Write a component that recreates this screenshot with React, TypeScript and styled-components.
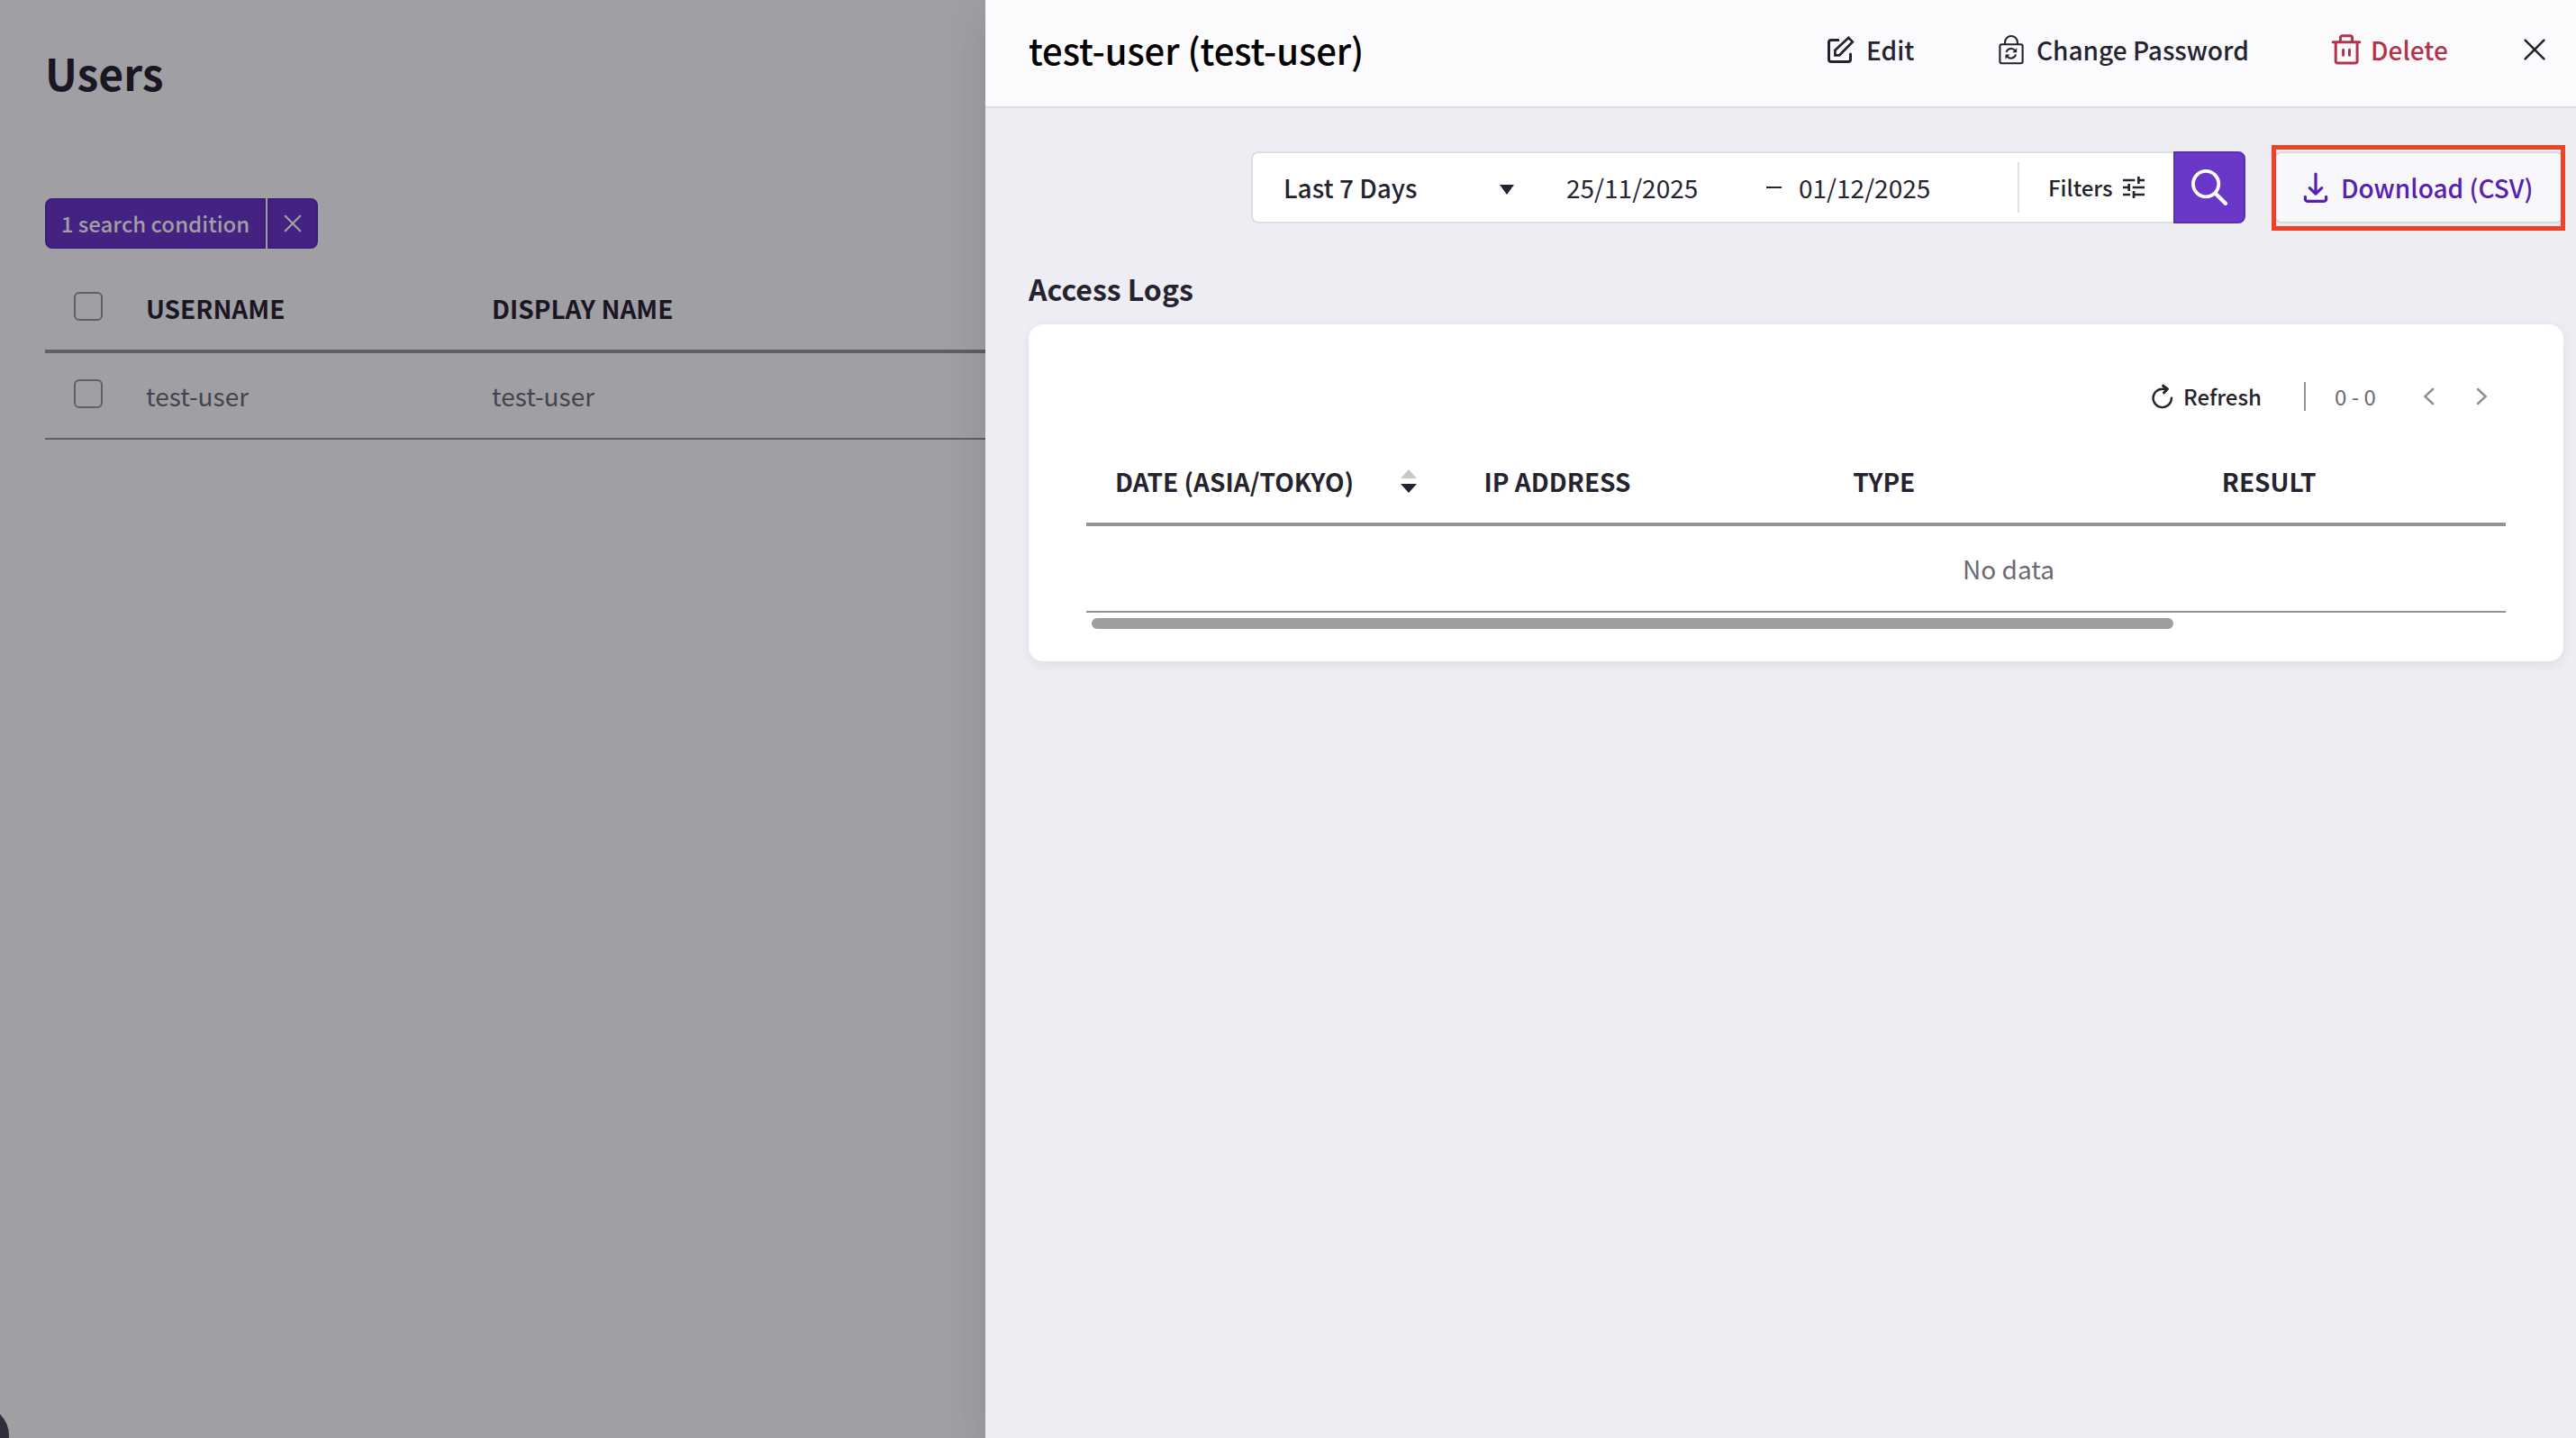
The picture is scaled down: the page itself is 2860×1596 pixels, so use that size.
import React from "react";
import styled, { createGlobalStyle } from "styled-components";

const ink = "#252330";
const line = "#939393";

const GlobalStyle = createGlobalStyle`
  *, *::before, *::after { box-sizing: border-box; }
  body {
    margin: 0;
    overflow: hidden;
    background: #a09fa4;
    font-family: "Noto Sans CJK JP", "Noto Sans", sans-serif;
    color: ${ink};
  }
  button { font: inherit; color: inherit; background: none; border: 0; padding: 0; margin: 0; text-align: left; }
  h1, h2, h3 { margin: 0; }
  svg { display: block; flex: none; }
`;

const Screen = styled.div`
  position: relative;
  display: grid;
  grid-template-columns: 1094px minmax(0, 1fr);
  height: 1596px;
  overflow: hidden;
`;

/* ---------- Dimmed users page ---------- */

const UsersPage = styled.main`
  padding: 44px 0 0 50px;
  background: #a09fa4;
  color: #1a1624;
  overflow: hidden;
`;

const PageTitle = styled.h1`
  font-size: 48px;
  font-weight: 700;
  line-height: 72px;
`;

const ConditionGroup = styled.div`
  display: flex;
  gap: 2px;
  margin-top: 104px;
  height: 56px;
`;

const ConditionButton = styled.button<{ $width: number; $side: "left" | "right" }>`
  display: flex;
  align-items: center;
  justify-content: center;
  width: ${(p) => p.$width}px;
  border: 2px solid #3c1d77;
  border-radius: ${(p) => (p.$side === "left" ? "8px 0 0 8px" : "0 8px 8px 0")};
  background: #442281;
  color: #a09fa4;
  font-size: 24px;
  font-weight: 500;
  line-height: 36px;
  white-space: nowrap;
`;

const UsersTable = styled.div`
  margin-top: 20px;
`;

const UsersRow = styled.div<{ $head?: boolean }>`
  display: grid;
  grid-template-columns: 112px 384px 1fr;
  align-items: center;
  height: 96px;
  border-bottom: ${(p) => (p.$head ? 4 : 2)}px solid #606064;
  font-size: 28px;
  font-weight: ${(p) => (p.$head ? 700 : 400)};
  line-height: 42px;
  color: ${(p) => (p.$head ? "#1a1624" : "#46434d")};
`;

const Checkbox = styled.span`
  width: 32px;
  height: 32px;
  margin: 0 0 4px 32px;
  border: 2px solid #606064;
  border-radius: 6px;
`;

const HelpBubble = styled.div`
  position: absolute;
  left: -54px;
  bottom: -29px;
  width: 64px;
  height: 64px;
  border-radius: 50%;
  background: #302e3a;
`;

/* ---------- Drawer ---------- */

const Drawer = styled.aside`
  position: relative;
  background: #eeedf3;
  box-shadow: 0 16px 48px rgba(0, 0, 0, 0.12);
`;

const DrawerHeader = styled.header`
  display: flex;
  align-items: center;
  height: 120px;
  padding: 0 32px 8px 48px;
  border-bottom: 2px solid #dfdee2;
  background: #fbfafd;
`;

const DrawerTitle = styled.h2`
  flex: 1;
  font-size: 40px;
  font-weight: 500;
  line-height: 60px;
  letter-spacing: -0.05px;
  color: #000;
`;

const HeaderAction = styled.button<{ $width: number; $gap: number; $danger?: boolean }>`
  display: flex;
  align-items: center;
  gap: ${(p) => p.$gap}px;
  width: ${(p) => p.$width}px;
  font-size: 28px;
  font-weight: 500;
  line-height: 40px;
  white-space: nowrap;
  color: ${(p) => (p.$danger ? "#b0344a" : ink)};
`;

const DrawerBody = styled.div`
  padding: 48px 14px 0 48px;
`;

const Toolbar = styled.div`
  display: flex;
  justify-content: flex-end;
  gap: 32px;
  height: 80px;
`;

const SearchGroup = styled.div`
  display: flex;
  align-items: stretch;
  width: 1104px;
`;

const SearchFields = styled.div`
  display: flex;
  align-items: center;
  flex: 1;
  border: 2px solid #dfdee2;
  border-right: 0;
  border-radius: 8px 0 0 8px;
  background: #fff;
  font-size: 28px;
  line-height: 42px;
  white-space: nowrap;
`;

const RangeSelect = styled.button`
  display: flex;
  align-items: center;
  justify-content: space-between;
  width: 348px;
  padding: 0 58px 0 34px;
  font-weight: 500;
`;

const Caret = styled.span`
  margin-top: 4px;
  border: 8px solid transparent;
  border-top: 11px solid ${ink};
  border-bottom: 0;
`;

const DateField = styled.span<{ $width: number }>`
  width: ${(p) => p.$width}px;
`;

const RangeDash = styled.span`
  width: 17px;
  height: 2px;
  margin-right: 19px;
  background: ${ink};
`;

const FieldDivider = styled.span`
  width: 2px;
  height: 56px;
  background: #dfdee2;
`;

const FiltersButton = styled.button`
  display: flex;
  align-items: center;
  justify-content: space-between;
  flex: 1;
  padding: 0 28px 0 32px;
  font-size: 24px;
  font-weight: 500;
  line-height: 36px;
`;

const SearchButton = styled.button`
  display: flex;
  align-items: center;
  justify-content: center;
  width: 80px;
  border: 2px solid #5a2fb0;
  border-radius: 0 8px 8px 0;
  background: #6a38c8;
`;

const DownloadSlot = styled.div`
  position: relative;
  width: 321px;
`;

const DownloadButton = styled.button`
  display: flex;
  align-items: center;
  gap: 14px;
  width: 100%;
  height: 80px;
  padding: 0 30px;
  border: 2px solid #d9d8df;
  border-radius: 8px;
  background: #f8f7fb;
  color: #5620b0;
  font-size: 28px;
  font-weight: 500;
  line-height: 42px;
  white-space: nowrap;
`;

const Highlight = styled.div`
  position: absolute;
  inset: -7px -2px -8px -3px;
  border: 5px solid #ee4126;
  pointer-events: none;
`;

const SectionTitle = styled.h3`
  margin-top: 48px;
  font-size: 32px;
  font-weight: 700;
  line-height: 48px;
`;

const Card = styled.section`
  height: 374px;
  margin-top: 16px;
  padding: 48px 64px 0;
  border-radius: 16px;
  background: #fff;
  box-shadow: 0 4px 12px rgba(50, 45, 80, 0.08);
`;

const CardToolbar = styled.div`
  display: flex;
  align-items: center;
  justify-content: flex-end;
  height: 64px;
  padding-right: 20px;
  font-size: 24px;
  line-height: 36px;
`;

const RefreshButton = styled.button`
  display: flex;
  align-items: center;
  gap: 10px;
  width: 170px;
  font-weight: 500;
`;

const ToolbarDivider = styled.span`
  width: 2px;
  height: 32px;
  background: ${line};
`;

const PageRange = styled.span`
  width: 46px;
  margin-left: 32px;
  color: #6b6974;
  white-space: nowrap;
`;

const PagerButton = styled.button<{ $offset: number }>`
  margin-left: ${(p) => p.$offset}px;
  color: ${line};
`;

const TableViewport = styled.div`
  margin-top: 16px;
  overflow: hidden;
`;

const LogHead = styled.div`
  display: grid;
  grid-template-columns: repeat(5, 1fr);
  align-items: center;
  width: 2048px;
  height: 96px;
  border-bottom: 4px solid ${line};
  font-size: 28px;
  font-weight: 700;
  line-height: 42px;
`;

const LogHeadCell = styled.div`
  display: flex;
  align-items: center;
  gap: 52px;
  padding-left: 32px;
  white-space: nowrap;
`;

const EmptyRow = styled.div`
  display: flex;
  align-items: center;
  justify-content: center;
  width: 2048px;
  height: 96px;
  border-bottom: 2px solid ${line};
  color: #6b6974;
  font-size: 28px;
  line-height: 42px;
`;

const ScrollTrack = styled.div`
  padding: 6px;
`;

const ScrollThumb = styled.div`
  width: 1201px;
  height: 12px;
  border-radius: 6px;
  background: #9e9e9e;
`;

/* ---------- Icons ---------- */

const EditIcon = () => (
  <svg width="34" height="34" viewBox="0 0 34 34" fill="none" stroke="currentColor" strokeWidth="3" strokeLinecap="round">
    <path d="M12.8 6.5H5a2.5 2.5 0 0 0-2.5 2.5v19A2.5 2.5 0 0 0 5 30.5h19a2.5 2.5 0 0 0 2.5-2.5v-6" />
    <path d="M9.4 17.8 24.3 3.9l4.5 4.5-14.6 14.9H9.4z" strokeWidth="2.7" />
  </svg>
);

const LockIcon = () => (
  <svg width="30" height="34" viewBox="0 0 30 34" fill="none" stroke="currentColor" strokeWidth="2.1">
    <rect x="2.4" y="11.3" width="25.2" height="21" rx="2" />
    <path d="M8 11V9a6.95 6.95 0 0 1 13.9 0v2" />
    <path d="M9.5 20a5.6 5.6 0 0 1 9.9-1.8M20.1 22.6a5.6 5.6 0 0 1-9.9 1.8" strokeWidth="2" />
    <path d="M21.2 15.2v5h-5zM8.5 27.5v-5h5z" fill="currentColor" stroke="none" />
  </svg>
);

const TrashIcon = () => (
  <svg width="34" height="34" viewBox="0 0 34 34" fill="none" stroke="currentColor" strokeWidth="3" strokeLinecap="round">
    <path d="M2.2 8.7h29.6M10.4 8V4a2.3 2.3 0 0 1 2.3-2.3h8.6A2.3 2.3 0 0 1 23.6 4v4M5.2 8.7v21.2a2.2 2.2 0 0 0 2.2 2.2h19.5a2.2 2.2 0 0 0 2.2-2.2V8.7" />
    <path d="M13.6 17.2v6M20.5 17.2v6" />
  </svg>
);

const CloseIcon = ({ size, reach, weight }: { size: number; reach: number; weight: number }) => {
  const a = size / 2 - reach;
  const b = size / 2 + reach;
  return (
    <svg width={size} height={size} fill="none" stroke="currentColor" strokeWidth={weight} strokeLinecap="round">
      <path d={`M${a} ${a}L${b} ${b}M${b} ${a}L${a} ${b}`} />
    </svg>
  );
};

const TuneIcon = () => (
  <svg width="32" height="32" viewBox="0 0 24 24" fill="currentColor">
    <path d="M3 17v2h6v-2H3zM3 5v2h10V5H3zm10 16v-2h8v-2h-8v-2h-2v6h2zM7 9v2H3v2h4v2h2V9H7zm14 4v-2H11v2h10zm-6-4h2V7h4V5h-4V3h-2v6z" />
  </svg>
);

const SearchIcon = () => (
  <svg width="40" height="40" viewBox="0 0 40 40" fill="none" stroke="#fff" strokeLinecap="round">
    <circle cx="16.1" cy="16.1" r="14.2" strokeWidth="3.8" />
    <path d="M26.5 26.5 37.8 37.8" strokeWidth="4.4" />
  </svg>
);

const DownloadIcon = () => (
  <svg width="28" height="36" viewBox="0 0 28 36" fill="none" stroke="currentColor" strokeWidth="3.2" strokeLinecap="round" strokeLinejoin="round">
    <path d="M14 3v21.5M7.3 18.7l6.7 6.4 6.7-6.4M2.4 28.3V31a2.3 2.3 0 0 0 2.3 2.3h18.6a2.3 2.3 0 0 0 2.3-2.3v-2.7" />
  </svg>
);

const RefreshIcon = () => (
  <svg width="26" height="32" viewBox="0 0 26 32" fill="none" stroke="currentColor" strokeWidth="2.4" strokeLinecap="round" strokeLinejoin="round">
    <path d="M22.9 17.6A10.2 10.2 0 1 1 12.7 7.7h4.6" />
    <path d="M13.6 4.2 18.4 7.8 14.6 11.8" strokeWidth="3" />
  </svg>
);

const Chevron = ({ flip }: { flip?: boolean }) => (
  <svg width="14" height="24" viewBox="0 0 14 24" fill="none" stroke="currentColor" strokeWidth="2.6" strokeLinecap="round">
    <path d={flip ? "M3 4l8.6 8L3 20" : "M11 4 2.4 12 11 20"} />
  </svg>
);

const SortIcon = () => (
  <svg width="18" height="26" viewBox="0 0 18 26">
    <path d="M9 0l9 10H0z" fill="#c8c8c8" />
    <path d="M9 26l9-10H0z" fill={ink} />
  </svg>
);

const logColumns = ["DATE (ASIA/TOKYO)", "IP ADDRESS", "TYPE", "RESULT", ""];

export default function App() {
  return (
    <>
      <GlobalStyle />
      <Screen>
        <UsersPage>
          <PageTitle>Users</PageTitle>
          <ConditionGroup>
            <ConditionButton $width={245} $side="left">1 search condition</ConditionButton>
            <ConditionButton $width={56} $side="right" aria-label="Clear conditions">
              <CloseIcon size={24} reach={8.2} weight={2.2} />
            </ConditionButton>
          </ConditionGroup>
          <UsersTable>
            <UsersRow $head>
              <Checkbox />
              <span>USERNAME</span>
              <span>DISPLAY NAME</span>
            </UsersRow>
            <UsersRow>
              <Checkbox />
              <span>test-user</span>
              <span>test-user</span>
            </UsersRow>
          </UsersTable>
          <HelpBubble />
        </UsersPage>

        <Drawer>
          <DrawerHeader>
            <DrawerTitle>test-user (test-user)</DrawerTitle>
            <HeaderAction $width={190} $gap={10}><EditIcon />Edit</HeaderAction>
            <HeaderAction $width={370} $gap={13}><LockIcon />Change Password</HeaderAction>
            <HeaderAction $width={212} $gap={10} $danger><TrashIcon />Delete</HeaderAction>
            <HeaderAction $width={28} $gap={0} aria-label="Close">
              <CloseIcon size={28} reach={10.4} weight={2.6} />
            </HeaderAction>
          </DrawerHeader>

          <DrawerBody>
            <Toolbar>
              <SearchGroup>
                <SearchFields>
                  <RangeSelect>Last 7 Days<Caret /></RangeSelect>
                  <DateField $width={222}>25/11/2025</DateField>
                  <RangeDash />
                  <DateField $width={243}>01/12/2025</DateField>
                  <FieldDivider />
                  <FiltersButton>Filters<TuneIcon /></FiltersButton>
                </SearchFields>
                <SearchButton aria-label="Search"><SearchIcon /></SearchButton>
              </SearchGroup>
              <DownloadSlot>
                <DownloadButton><DownloadIcon />Download (CSV)</DownloadButton>
                <Highlight />
              </DownloadSlot>
            </Toolbar>

            <SectionTitle>Access Logs</SectionTitle>
            <Card>
              <CardToolbar>
                <RefreshButton><RefreshIcon />Refresh</RefreshButton>
                <ToolbarDivider />
                <PageRange>0 - 0</PageRange>
                <PagerButton $offset={52} aria-label="Previous"><Chevron /></PagerButton>
                <PagerButton $offset={44} aria-label="Next"><Chevron flip /></PagerButton>
              </CardToolbar>
              <TableViewport>
                <LogHead>
                  {logColumns.map((name, i) => (
                    <LogHeadCell key={i}>
                      {name}
                      {i === 0 && <SortIcon />}
                    </LogHeadCell>
                  ))}
                </LogHead>
                <EmptyRow>No data</EmptyRow>
                <ScrollTrack><ScrollThumb /></ScrollTrack>
              </TableViewport>
            </Card>
          </DrawerBody>
        </Drawer>
      </Screen>
    </>
  );
}
